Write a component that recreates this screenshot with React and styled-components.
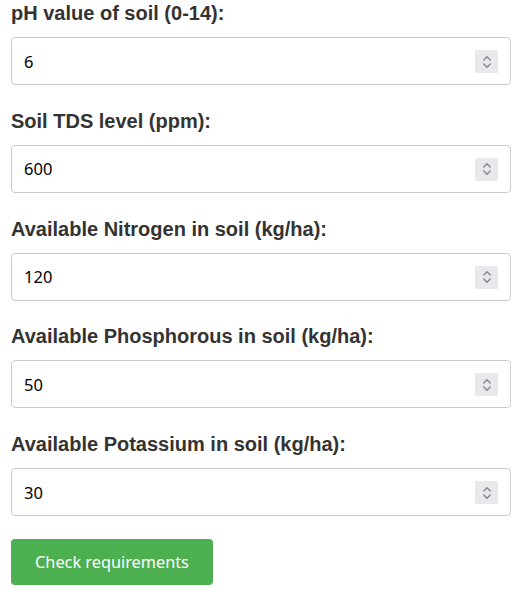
import React from "react";
import styled, { createGlobalStyle } from "styled-components";

const Global = createGlobalStyle`
  html, body { margin: 0; padding: 0; background: #fff; }
  body { font-family: "Liberation Sans", Arial, sans-serif; }
`;

const Form = styled.form`
  display: flex;
  flex-direction: column;
  width: 500px;
  padding: 2px 13px 0 11px;
`;

const Field = styled.div`
  display: flex;
  flex-direction: column;
  & + & { margin-top: 24.75px; }
`;

const Label = styled.label`
  font-family: "Liberation Sans", Arial, sans-serif;
  font-weight: bold;
  font-size: 20px;
  line-height: 23px;
  color: #333;
  margin-bottom: 12px;
`;

const InputBox = styled.div`
  display: flex;
  align-items: center;
  height: 48px;
  box-sizing: border-box;
  border: 1px solid #ccc;
  border-radius: 4px;
  padding: 0 12px 0 12px;
  background: #fff;
`;

const Input = styled.input`
  flex: 1;
  border: none;
  outline: none;
  padding: 0;
  font-family: "Noto Sans", "Open Sans", sans-serif;
  font-size: 16.5px;
  color: #000;
  background: transparent;
  &::-webkit-outer-spin-button,
  &::-webkit-inner-spin-button { -webkit-appearance: none; margin: 0; }
  -moz-appearance: textfield;
`;

const Spinner = styled.span`
  display: flex;
  align-items: center;
  justify-content: center;
  width: 23px;
  height: 23px;
  margin-top: 1px;
  background: #e9e9ed;
  border-radius: 1px;
`;

const ButtonRow = styled.div`
  margin-top: 23px;
`;

const Button = styled.button`
  width: 202px;
  height: 46px;
  border: none;
  border-radius: 4px;
  background: #4caf50;
  color: #fff;
  font-family: "Noto Sans", "Open Sans", sans-serif;
  font-size: 16.3px;
  cursor: pointer;
  padding: 0;
`;

const SpinIcon = () => (
  <svg width="10" height="14" viewBox="0 0 10 14" fill="none" stroke="#85858c" strokeWidth="1.4" strokeLinecap="round" strokeLinejoin="round">
    <polyline points="1.8,5 5,1.8 8.2,5" />
    <polyline points="1.8,9 5,12.2 8.2,9" />
  </svg>
);

const fields = [
  { label: "pH value of soil (0-14):", value: "6" },
  { label: "Soil TDS level (ppm):", value: "600" },
  { label: "Available Nitrogen in soil (kg/ha):", value: "120" },
  { label: "Available Phosphorous in soil (kg/ha):", value: "50" },
  { label: "Available Potassium in soil (kg/ha):", value: "30" },
];

export default function App() {
  return (
    <>
      <Global />
      <Form onSubmit={(e) => e.preventDefault()}>
        {fields.map((f, i) => (
          <Field key={i}>
            <Label htmlFor={`f${i}`}>{f.label}</Label>
            <InputBox>
              <Input id={`f${i}`} type="number" defaultValue={f.value} />
              <Spinner><SpinIcon /></Spinner>
            </InputBox>
          </Field>
        ))}
        <ButtonRow>
          <Button type="submit">Check requirements</Button>
        </ButtonRow>
      </Form>
    </>
  );
}
